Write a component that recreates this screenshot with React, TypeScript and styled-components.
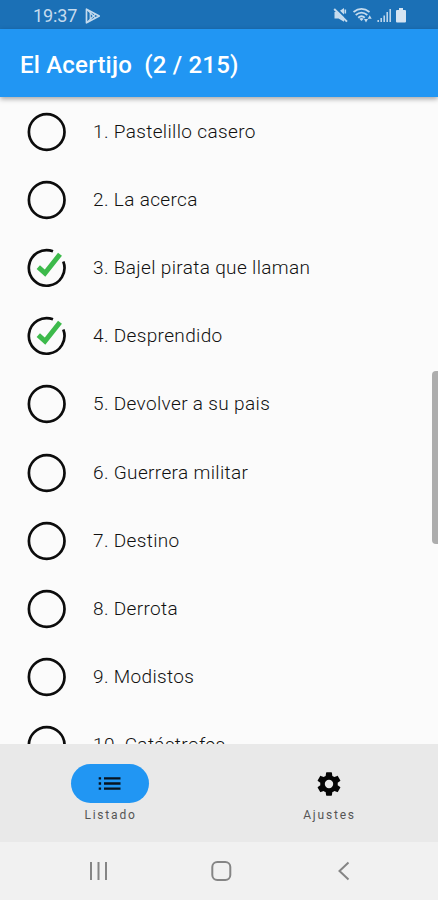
import React from 'react';
import styled, { createGlobalStyle } from 'styled-components';

const GlobalStyle = createGlobalStyle`
  * { box-sizing: border-box; }
  body { margin: 0; background: #fafafa; font-family: Roboto, "Noto Sans", sans-serif; }
`;

const Screen = styled.div`
  width: 438px;
  height: 900px;
  display: flex;
  flex-direction: column;
  overflow: hidden;
  background: #fbfbfb;
`;

const StatusBar = styled.div`
  flex: 0 0 29px;
  display: flex;
  align-items: center;
  justify-content: space-between;
  padding: 3px 30px 0 33px;
  background: #1b70b6;
  color: #c5dbee;
`;

const StatusGroup = styled.div`
  display: flex;
  align-items: center;
  gap: 8px;
`;

const Clock = styled.span`
  font-size: 18px;
  line-height: 20px;
  letter-spacing: -0.1px;
`;

const AppBar = styled.header`
  flex: 0 0 68px;
  display: flex;
  align-items: center;
  padding: 4px 20px 0;
  background: #2196f3;
  color: #fff;
  box-shadow: 0 2px 5px rgba(0, 0, 0, 0.35);
  z-index: 1;
`;

const Title = styled.h1`
  margin: 0;
  font-size: 24px;
  font-weight: 500;
  line-height: 30px;
  letter-spacing: 0.2px;
  white-space: pre;
`;

const ListArea = styled.main`
  flex: 1;
  min-height: 0;
  display: flex;
  justify-content: space-between;
  overflow: hidden;
`;

const List = styled.ul`
  margin: 0;
  padding: 1px 0 0 27px;
  list-style: none;
`;

const Row = styled.li`
  height: 68.1px;
  display: flex;
  align-items: center;
  gap: 26px;
`;

const RowText = styled.span`
  font-size: 19px;
  font-weight: 300;
  line-height: 24px;
  letter-spacing: 0.35px;
  color: #111;
  white-space: nowrap;
`;

const ScrollThumb = styled.div`
  width: 6px;
  height: 173px;
  margin-top: 274px;
  border-radius: 4px 0 0 4px;
  background: #adadad;
`;

const BottomNav = styled.nav`
  flex: 0 0 98px;
  display: flex;
  background: #e9e9e9;
`;

const Tab = styled.div`
  flex: 1;
  display: flex;
  flex-direction: column;
  align-items: center;
  padding-top: 20px;
`;

const Pill = styled.div<{ $active?: boolean }>`
  width: 78px;
  height: 39px;
  display: flex;
  align-items: center;
  justify-content: center;
  border-radius: 20px;
  background: ${(p) => (p.$active ? '#2196f3' : 'transparent')};
`;

const TabLabel = styled.span`
  margin-top: 4px;
  font-size: 12px;
  line-height: 16px;
  letter-spacing: 1.8px;
  padding-left: 2px;
  color: #555;
`;

const SystemNav = styled.div`
  flex: 0 0 58px;
  display: flex;
  align-items: center;
  justify-content: space-between;
  padding: 0 84px 0 86px;
  background: #f1f1f1;
`;

const Icon = styled.svg`
  display: block;
  flex: none;
`;

const items = [
  { name: 'Pastelillo casero', solved: false },
  { name: 'La acerca', solved: false },
  { name: 'Bajel pirata que llaman', solved: true },
  { name: 'Desprendido', solved: true },
  { name: 'Devolver a su pais', solved: false },
  { name: 'Guerrera militar', solved: false },
  { name: 'Destino', solved: false },
  { name: 'Derrota', solved: false },
  { name: 'Modistos', solved: false },
  { name: 'Catástrofes', solved: false },
];

const Mark = ({ solved }: { solved: boolean }) => (
  <Icon width="40" height="40" viewBox="0 0 40 40" fill="none">
    {solved ? (
      <>
        <path d="M26 3.3A17.8 17.8 0 1 0 36.3 13.6" stroke="#0c0c0c" strokeWidth="2.7" />
        <path d="M11.3 19.2L18 25.2L33 6.3" stroke="#3dba4b" strokeWidth="5" />
      </>
    ) : (
      <circle cx="19.7" cy="20" r="17.8" stroke="#0c0c0c" strokeWidth="2.7" />
    )}
  </Icon>
);

const PlayIcon = () => (
  <Icon width="16" height="16" viewBox="0 0 16 16" fill="none" stroke="currentColor" strokeWidth="1.7" strokeLinejoin="round">
    <path d="M1.5 1.2L14.2 8L1.5 14.8Z" />
    <path d="M2 1.5L10.5 10M2 14.5L10.5 6M5.2 5v6" strokeWidth="1.2" />
  </Icon>
);

const StatusIcons = () => (
  <Icon width="75" height="18" viewBox="0 0 75 18" fill="none">
    <path d="M1.5 5h3.6L11 1v13.8L5.5 11.5H1.5Z" fill="#c5dbee" />
    <path d="M2.2 0.5L15.2 13" stroke="#1b70b6" strokeWidth="2" />
    <path d="M1.2 2L14 14.6" stroke="#c5dbee" strokeWidth="2" />
    <path d="M12.3 2.5v4" stroke="#c5dbee" strokeWidth="1.6" />
    <path d="M20.5 5Q28.5-1.2 36.5 5M22.7 8Q28.5 3.2 34.3 8M25.2 10.7Q28.5 7.8 31.8 10.7" stroke="#c5dbee" strokeWidth="1.8" />
    <path d="M26.3 11.8Q28.5 10.2 30.7 11.8L28.5 14Z" fill="#c5dbee" />
    <path d="M31 12h4L33 15.5ZM34.7 11.8h4L36.7 8.3Z" fill="#c5dbee" />
    <path d="M45.2 15v-2M48.2 15v-4M51.2 15V8.5M54.2 15V5M57.2 15V2" stroke="#c5dbee" strokeWidth="1.5" />
    <path d="M66 1h4v2h2q1 0 1 1v10.5q0 1-1 1h-8q-1 0-1-1V4q0-1 1-1h2Z" fill="#d5e4f2" />
  </Icon>
);

const ListIcon = () => (
  <Icon width="23" height="15" viewBox="0 0 23 15" stroke="#07131f" strokeWidth="2.4">
    <path d="M0.7 2.4h2.4M0.7 7.5h2.4M0.7 12.6h2.4M6 2.4h16.5M6 7.5h16.5M6 12.6h16.5" />
  </Icon>
);

const GearIcon = () => (
  <Icon width="28" height="28" viewBox="0 0 24 24" fill="#050505">
    <path d="M19.43 12.98c.04-.32.07-.64.07-.98s-.03-.66-.07-.98l2.11-1.65c.19-.15.24-.42.12-.64l-2-3.46c-.12-.22-.39-.3-.61-.22l-2.49 1c-.52-.4-1.08-.73-1.69-.98l-.38-2.65C14.46 2.18 14.25 2 14 2h-4c-.25 0-.46.18-.49.42l-.38 2.65c-.61.25-1.17.59-1.69.98l-2.49-1c-.23-.09-.49 0-.61.22l-2 3.46c-.13.22-.07.49.12.64l2.11 1.65c-.04.32-.07.65-.07.98s.03.66.07.98l-2.11 1.65c-.19.15-.24.42-.12.64l2 3.46c.12.22.39.3.61.22l2.49-1c.52.4 1.08.73 1.69.98l.38 2.65c.03.24.24.42.49.42h4c.25 0 .46-.18.49-.42l.38-2.65c.61-.25 1.17-.59 1.69-.98l2.49 1c.23.09.49 0 .61-.22l2-3.46c.12-.22.07-.49-.12-.64l-2.11-1.65zM12 15.6A3.6 3.6 0 1 1 12 8.4a3.6 3.6 0 0 1 0 7.2z" />
  </Icon>
);

export default function App() {
  return (
    <>
      <GlobalStyle />
      <Screen>
        <StatusBar>
          <StatusGroup>
            <Clock>19:37</Clock>
            <PlayIcon />
          </StatusGroup>
          <StatusIcons />
        </StatusBar>
        <AppBar>
          <Title>{'El Acertijo  (2 / 215)'}</Title>
        </AppBar>
        <ListArea>
          <List>
            {items.map((item, i) => (
              <Row key={item.name}>
                <Mark solved={item.solved} />
                <RowText>{`${i + 1}. ${item.name}`}</RowText>
              </Row>
            ))}
          </List>
          <ScrollThumb />
        </ListArea>
        <BottomNav>
          <Tab>
            <Pill $active><ListIcon /></Pill>
            <TabLabel>Listado</TabLabel>
          </Tab>
          <Tab>
            <Pill><GearIcon /></Pill>
            <TabLabel>Ajustes</TabLabel>
          </Tab>
        </BottomNav>
        <SystemNav>
          <Icon width="24" height="20" viewBox="0 0 24 20" stroke="#858585" strokeWidth="2">
            <path d="M5 1v18M12.5 1v18M20 1v18" />
          </Icon>
          <Icon width="22" height="22" viewBox="0 0 22 22" fill="none" stroke="#858585" strokeWidth="2">
            <rect x="1.3" y="2" width="18" height="18" rx="5" />
          </Icon>
          <Icon width="20" height="20" viewBox="0 0 20 20" fill="none" stroke="#858585" strokeWidth="2">
            <path d="M14.5 1.5L5.5 10L14.5 18.5" />
          </Icon>
        </SystemNav>
      </Screen>
    </>
  );
}
